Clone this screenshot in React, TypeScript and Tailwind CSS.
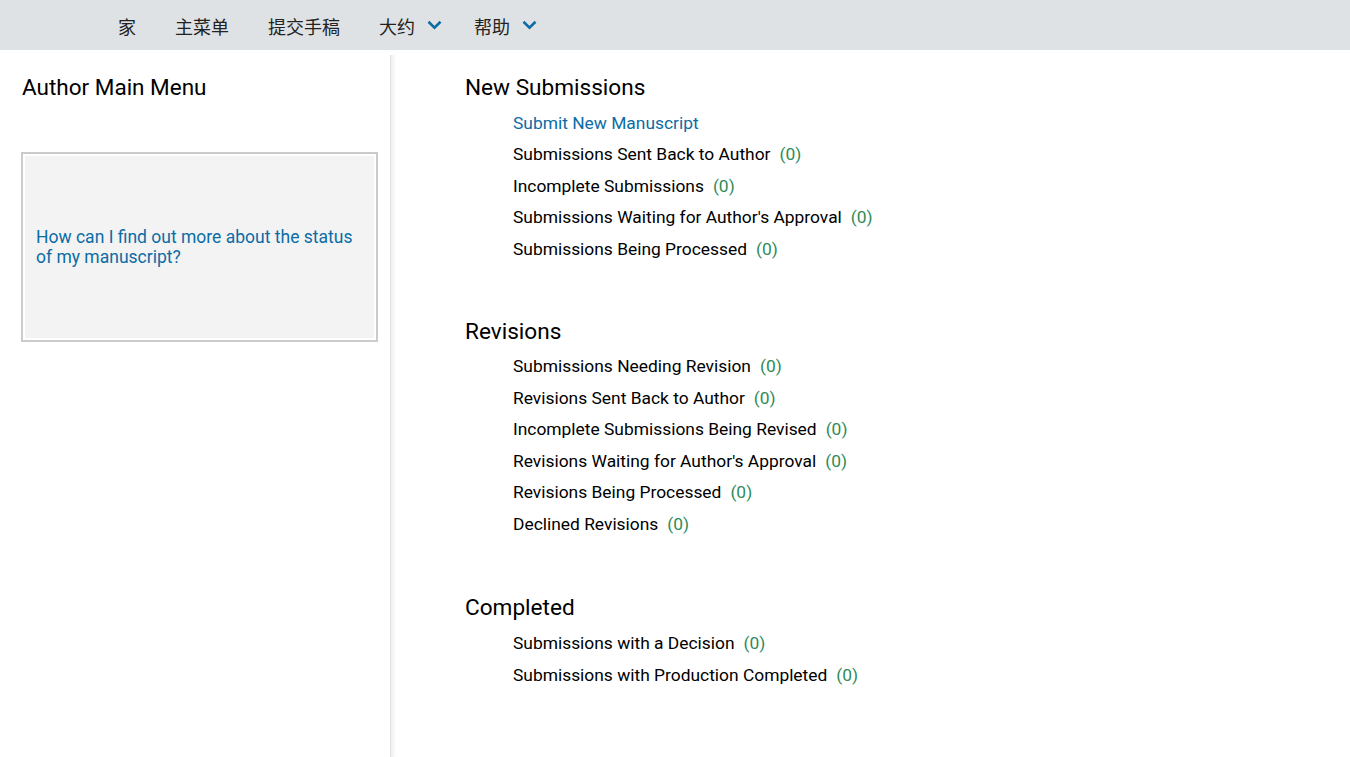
import React from 'react';

const navItems = [
  { label: '家', menu: false },
  { label: '主菜单', menu: false },
  { label: '提交手稿', menu: false },
  { label: '大约', menu: true },
  { label: '帮助', menu: true },
];

type Row = { label: string; count?: number; link?: boolean };

const sections: { title: string; rows: Row[] }[] = [
  {
    title: 'New Submissions',
    rows: [
      { label: 'Submit New Manuscript', link: true },
      { label: 'Submissions Sent Back to Author', count: 0 },
      { label: 'Incomplete Submissions', count: 0 },
      { label: "Submissions Waiting for Author's Approval", count: 0 },
      { label: 'Submissions Being Processed', count: 0 },
    ],
  },
  {
    title: 'Revisions',
    rows: [
      { label: 'Submissions Needing Revision', count: 0 },
      { label: 'Revisions Sent Back to Author', count: 0 },
      { label: 'Incomplete Submissions Being Revised', count: 0 },
      { label: "Revisions Waiting for Author's Approval", count: 0 },
      { label: 'Revisions Being Processed', count: 0 },
      { label: 'Declined Revisions', count: 0 },
    ],
  },
  {
    title: 'Completed',
    rows: [
      { label: 'Submissions with a Decision', count: 0 },
      { label: 'Submissions with Production Completed', count: 0 },
    ],
  },
];

const Chevron = () => (
  <svg width="15" height="10" viewBox="0 0 15 10" className="ml-3 mr-[-7px] mt-[-2px]">
    <path d="M1.5 1.8 L7.5 7.6 L13.5 1.8" fill="none" stroke="#0b6ca5" strokeWidth="2.6" />
  </svg>
);

export default function App() {
  return (
    <div className="min-h-[757px] bg-white font-['Roboto','Noto_Sans_CJK_SC',sans-serif] text-black">
      {/* top nav */}
      <nav className="flex h-[50px] items-center bg-[#dfe2e5] pl-[118px] pt-[2px] gap-[39px]">
        {navItems.map(item => (
          <div key={item.label} className="flex items-center text-[18px] text-[#222] font-['Noto_Sans_CJK_SC',sans-serif]">
            {item.label}
            {item.menu && <Chevron />}
          </div>
        ))}
      </nav>

      <div className="flex">
        {/* sidebar */}
        <aside className="w-[390px] shrink-0 pl-[21px] pr-[12px] pt-[24px]">
          <h2 className="pl-px text-[22.5px] leading-[26px]">Author Main Menu</h2>
          <div className="mt-[52px] border-2 border-[#cbcbcb] p-[2px]">
            <div className="flex h-[182px] items-center bg-[#f3f3f3] px-[11px]">
              <a href="#" className="text-[17.5px] leading-[20px] text-[#0b6ca5]">
                How can I find out more about the status of my manuscript?
              </a>
            </div>
          </div>
        </aside>
        <div className="mt-[5px] w-[6px] min-h-[702px] border-l border-[#e2e2e2] bg-gradient-to-r from-[#efefef] to-white" />

        {/* main */}
        <main className="pl-[69px] pt-[25px]">
          {sections.map((s, i) => (
            <section key={s.title} className={i === 0 ? '' : i === 1 ? 'mt-[54px]' : 'mt-[55px]'}>
              <h2 className="text-[22.6px] leading-[26px]">{s.title}</h2>
              <ul className={`${i === 2 ? 'mt-[7px]' : 'mt-[6px]'} pl-[48px]`}>
                {s.rows.map(r => (
                  <li key={r.label} className="flex h-[31.5px] items-center text-[17.4px]">
                    {r.link ? (
                      <a href="#" className="text-[#0b6ca5]">{r.label}</a>
                    ) : (
                      <>
                        <span>{r.label}</span>
                        <span className="ml-[9px] text-[#2e8b57]">({r.count})</span>
                      </>
                    )}
                  </li>
                ))}
              </ul>
            </section>
          ))}
        </main>
      </div>
    </div>
  );
}
